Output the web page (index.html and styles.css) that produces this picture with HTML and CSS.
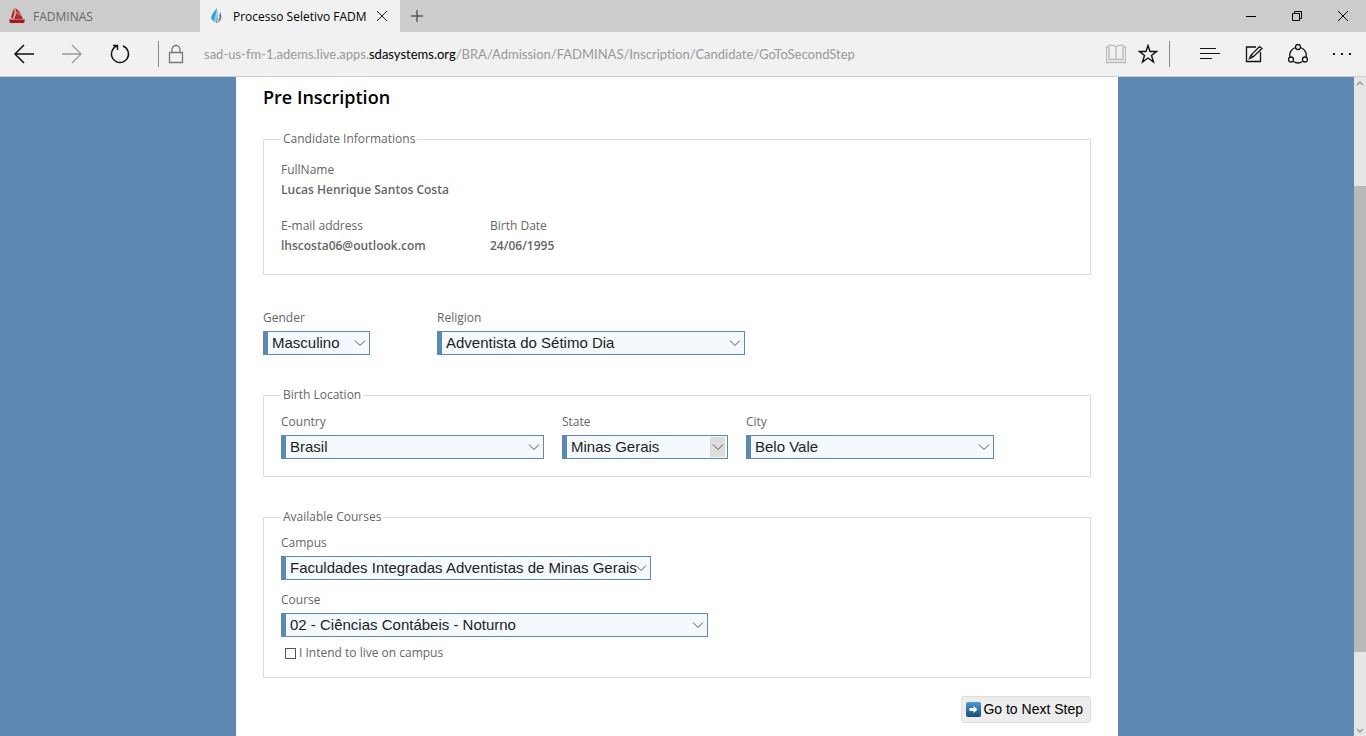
FILE: index.html
```html
<!DOCTYPE html>
<html lang="en">
<head>
<meta charset="utf-8">
<title>Processo Seletivo FADMINAS</title>
<link rel="stylesheet" href="styles.css">
</head>
<body>
<header class="browser">
  <div class="tabbar">
    <div class="tab">
      <svg class="favicon" width="16" height="16" viewBox="0 0 16 16"><path d="M5 0C6 2 6 8 3 11C1 10 3 6 5 0ZM6 0C10 2 12 6 14 11H5C7 7 7 3 6 0Z" fill="#b32a2c"/><path d="M6 1Q8 6 5 10M7 4L13 8" stroke="#d7a0a0" fill="none"/><path d="M0 11.5H16L15 15H1Z" fill="#a31b20"/></svg>
      <span class="tab-title">FADMINAS</span>
    </div>
    <div class="tab tab-active">
      <svg class="favicon" width="16" height="16" viewBox="0 0 16 16"><path d="M8 0C8 5 6 8 5 13C0 11 2 7 8 0Z" fill="#2aa5e6"/><path d="M8 2C10 7 9 11 5 15C4 11 9 7 8 2Z" fill="#74cdf5"/><path d="M11 4C14 9 12 14 7 15C6 12 11 9 11 4Z" fill="#707c87"/><path d="M10 8Q10 11 8 14" stroke="#fff" fill="none"/></svg>
      <span class="tab-title">Processo Seletivo FADM</span>
      <button class="tab-close" aria-label="Close tab"><svg width="12" height="12" viewBox="0 0 12 12"><path d="M1 1L11 11M11 1L1 11" stroke="#222" fill="none"/></svg></button>
    </div>
    <button class="new-tab" aria-label="New tab"><svg width="12" height="12" viewBox="0 0 12 12"><path d="M6 0V12M0 6H12" stroke="#555" fill="none" stroke-width="1.4"/></svg></button>
    <div class="window-buttons">
      <button aria-label="Minimize"><svg width="12" height="12" viewBox="0 0 12 12"><path d="M1 6.5H11" stroke="#000"/></svg></button>
      <button aria-label="Restore"><svg width="12" height="12" viewBox="0 0 12 12"><path d="M1.5 3.5H8.500V10.500H1.500ZM3.500 3.500V1.500H10.500V8.500H8.500" stroke="#000" fill="none"/></svg></button>
      <button aria-label="Close"><svg width="12" height="12" viewBox="0 0 12 12"><path d="M1 1L11 11M11 1L1 11" stroke="#000" fill="none"/></svg></button>
    </div>
  </div>
  <div class="toolbar">
    <nav class="nav-buttons">
      <button aria-label="Back"><svg width="22" height="20" viewBox="0 0 22 20"><path d="M21 10H2M11 1L2 10L11 19" stroke="#111" fill="none" stroke-width="1.5"/></svg></button>
      <button aria-label="Forward"><svg width="22" height="20" viewBox="0 0 22 20"><path d="M1 10H20M11 1L20 10L11 19" stroke="#999" fill="none" stroke-width="1.3"/></svg></button>
      <button aria-label="Refresh"><svg width="22" height="20" viewBox="0 0 22 20"><path d="M14 2A8.500 8.500 0 1 1 8 2M4 1.500H8.500V6" stroke="#111" fill="none" stroke-width="1.4"/></svg></button>
    </nav>
    <div class="address">
      <svg class="lock" width="16" height="20" viewBox="0 0 16 20"><path d="M1.500 8.500H14.500V18.500H1.500ZM4 8V5.500A4 4 0 0 1 12 5.500V8" stroke="#777" fill="none" stroke-width="1.3"/></svg>
      <div class="url">sad-us-fm-1.adems.live.apps.<span class="domain">sdasystems.org</span>/BRA/Admission/FADMINAS/Inscription/Candidate/GoToSecondStep</div>
      <button aria-label="Reading view"><svg width="20" height="20" viewBox="0 0 20 20"><path d="M3 3H.500V18.500H19.500V3H17M10 3V16M10 3Q7 .500 3 1.500V15.500H17V1.500Q13 .500 10 3" stroke="#bbb" fill="none" stroke-width="1.3"/></svg></button>
      <button aria-label="Favorites"><svg width="20" height="20" viewBox="0 0 20 20"><path d="M10 1.500L12 7.500H18.500L13.500 11.500L15.500 18L10 14L4.500 18L6.500 11.500L1.500 7.500H8Z" stroke="#111" fill="none" stroke-width="1.4"/></svg></button>
    </div>
    <div class="tools">
      <button aria-label="Hub"><svg width="20" height="20" viewBox="0 0 20 20"><path d="M0 4.500H16M0 9.500H20M0 14.500H12" stroke="#111" stroke-width="1"/></svg></button>
      <button aria-label="Web note"><svg width="20" height="20" viewBox="0 0 20 20"><path d="M12 3H2.500V17.500H16.500V8M5.500 14.500L7 11L15.500 2.500L18 4.500L9 13ZM7 11L9 13" stroke="#111" fill="none" stroke-width="1.3"/></svg></button>
      <button aria-label="Share"><svg width="20" height="20" viewBox="0 0 20 20"><g stroke="#111" fill="none" stroke-width="1.3"><circle cx="10" cy="3" r="2.500"/><circle cx="3" cy="15.500" r="2.500"/><circle cx="17" cy="15.500" r="2.500"/><path d="M7.500 3.500A8 8 0 0 0 2 13M12.500 3.500A8 8 0 0 1 18 13M5.500 17.500A8 8 0 0 0 14.500 17.500"/></g></svg></button>
      <button aria-label="More"><svg width="20" height="20" viewBox="0 0 20 20"><path d="M1 9H3V11H1ZM9 9H11V11H9ZM17 9H19V11H17Z" fill="#111"/></svg></button>
    </div>
  </div>
</header>
<div class="viewport">
  <main class="page">
    <form class="form">
      <h1 class="title">Pre Inscription</h1>
      <fieldset class="group info">
        <legend>Candidate Informations</legend>
        <dl class="fact"><dt>FullName</dt><dd>Lucas Henrique Santos Costa</dd></dl>
        <div class="facts">
          <dl class="fact"><dt>E-mail address</dt><dd>lhscosta06@outlook.com</dd></dl>
          <dl class="fact"><dt>Birth Date</dt><dd>24/06/1995</dd></dl>
        </div>
      </fieldset>
      <div class="row personal">
        <div class="field gender"><label for="gender">Gender</label><div class="picker"><select id="gender"><option>Masculino</option></select><svg class="chevron" viewBox="0 0 15 20"><path d="M3 7.500L8 12.500L13 7.500"/></svg></div></div>
        <div class="field religion"><label for="religion">Religion</label><div class="picker"><select id="religion"><option>Adventista do Sétimo Dia</option></select><svg class="chevron" viewBox="0 0 15 20"><path d="M3 7.500L8 12.500L13 7.500"/></svg></div></div>
      </div>
      <fieldset class="group location">
        <legend>Birth Location</legend>
        <div class="row">
          <div class="field country"><label for="country">Country</label><div class="picker"><select id="country"><option>Brasil</option></select><svg class="chevron" viewBox="0 0 15 20"><path d="M3 7.500L8 12.500L13 7.500"/></svg></div></div>
          <div class="field state"><label for="state">State</label><div class="picker"><select id="state"><option>Minas Gerais</option></select><svg class="chevron chevron-active" viewBox="0 0 15 20"><path d="M3 7.500L8 12.500L13 7.500"/></svg></div></div>
          <div class="field city"><label for="city">City</label><div class="picker"><select id="city"><option>Belo Vale</option></select><svg class="chevron" viewBox="0 0 15 20"><path d="M3 7.500L8 12.500L13 7.500"/></svg></div></div>
        </div>
      </fieldset>
      <fieldset class="group courses">
        <legend>Available Courses</legend>
        <div class="field campus"><label for="campus">Campus</label><div class="picker"><select id="campus"><option>Faculdades Integradas Adventistas de Minas Gerais</option></select><svg class="chevron" viewBox="0 0 15 20"><path d="M3 7.500L8 12.500L13 7.500"/></svg></div></div>
        <div class="field course"><label for="course">Course</label><div class="picker"><select id="course"><option>02 - Ciências Contábeis - Noturno</option></select><svg class="chevron" viewBox="0 0 15 20"><path d="M3 7.500L8 12.500L13 7.500"/></svg></div></div>
        <div class="check"><input type="checkbox" id="live"><label for="live">I Intend to live on campus</label></div>
      </fieldset>
      <button type="button" class="next"><svg width="15" height="15" viewBox="0 0 15 15"><defs><linearGradient id="blue" x2="0" y2="1"><stop stop-color="#4d9bd0"/><stop offset="1" stop-color="#174a7c"/></linearGradient></defs><rect width="15" height="15" rx="2" fill="url(#blue)"/><path d="M3.500 6H7.500V4L11.500 7.500L7.500 11V9H3.500Z" fill="#fff"/></svg>Go to Next Step</button>
    </form>
  </main>
  <div class="scrollbar">
    <svg width="8" height="6" viewBox="0 0 8 6"><path d="M1 5L4 2L7 5" stroke="#999" fill="none" stroke-width="1.5"/></svg>
    <div class="track"><div class="thumb"></div></div>
    <svg width="8" height="6" viewBox="0 0 8 6"><path d="M1 1L4 4L7 1" stroke="#999" fill="none" stroke-width="1.5"/></svg>
  </div>
</div>
</body>
</html>
```
FILE: styles.css
```css
* { box-sizing: border-box; }
body { margin: 0; height: 100vh; display: flex; flex-direction: column; overflow: hidden; font-family: "Open Sans", "Noto Sans", sans-serif; font-size: 12px; }
button { border: 0; padding: 0; background: none; display: flex; align-items: center; justify-content: center; }
svg { display: block; flex: none; }

.browser { flex: none; background: #f1f1f1; border-bottom: 1px solid #ccc; }
.tabbar { display: flex; height: 32px; background: #ccc; }
.tab { width: 200px; padding: 0 10px 0 9px; display: flex; align-items: center; gap: 8px; color: #666; white-space: nowrap; }
.tab-active { background: #f1f1f1; color: #000; }
.tab-title { flex: 1; overflow: hidden; line-height: 18px; padding-top: 2px; }
.tab-close { width: 16px; height: 16px; }
.new-tab { width: 34px; }
.window-buttons { margin-left: auto; display: flex; }
.window-buttons button { width: 46px; }
.toolbar { display: flex; align-items: center; height: 44px; }
.nav-buttons { display: flex; }
.nav-buttons button { width: 48px; }
.address { flex: 1; display: flex; align-items: center; gap: 12px; height: 26px; margin-left: 14px; padding: 0 11px 0 9px; border-left: 1px solid #888; border-right: 1px solid #888; }
.url { flex: 1; margin-left: 8px; color: #999; white-space: nowrap; overflow: hidden; font-family: Lato, "Open Sans", sans-serif; font-size: 13px; line-height: 20px; }
.domain { color: #000; }
.tools { display: flex; padding: 0 2px 0 18px; }
.tools button { width: 44px; }

.viewport { flex: 1; min-height: 0; display: flex; background: #5c88b3; }
.page { flex: 1; display: flex; justify-content: center; overflow: hidden; }
.form { width: 882px; padding: 8px 27px 0; background: #fff; color: #666; display: flex; flex-direction: column; }
.title { margin: 0; font-size: 18px; font-weight: 600; line-height: 24px; color: #000; }
.group { margin: 32px 0 0; border: 1px solid #ddd; padding: 9px 17px 17px; min-width: 0; }
.group legend { padding: 0 2px; line-height: 16px; }
.info { margin-top: 22px; padding: 13px 17px 18px; }
.fact { margin: 0; line-height: 20px; }
.fact dd { margin: 0; font-weight: 600; }
.facts { display: grid; grid-template-columns: 209px 1fr; margin-top: 16px; }
.row { display: flex; gap: 18px; }
.personal { margin-top: 33px; gap: 67px; }
.field { max-width: 100%; }
.field label { display: block; line-height: 20px; margin-bottom: 3px; }
.gender { width: 107px; }
.religion { width: 308px; }
.country { width: 263px; }
.state { width: 166px; }
.city { width: 248px; }
.campus { width: 370px; }
.course { width: 427px; margin-top: 10px; }
.picker { display: grid; align-items: center; }
.picker select { grid-area: 1 / 1; appearance: none; width: 100%; height: 24px; margin: 0; padding: 0 12px 2px 4px; border: 1px solid #5c88b3; border-left-width: 5px; border-radius: 0; background: #f4f9fe; color: #222; font: 15px "Liberation Sans", Arial, sans-serif; }
.chevron { grid-area: 1 / 1; justify-self: end; width: 15px; height: 20px; margin-right: 3px; fill: none; stroke: #555; stroke-width: 1; pointer-events: none; }
.chevron-active { background: #ddd; }
.courses { padding: 8px 17px 14px; }
.check { display: flex; align-items: center; gap: 3px; margin: 6px 0 0 4px; line-height: 20px; }
.check input { appearance: none; width: 11px; height: 11px; margin: 0; border: 1px solid #555; background: #fff; }
.next { align-self: flex-end; margin-top: 18px; height: 27px; padding: 0 7px 1px 4px; gap: 2px; border: 1px solid #ddd; border-radius: 3px; background: #ededed; color: #000; font: 14px "Liberation Sans", Arial, sans-serif; }

.scrollbar { width: 12px; padding: 3px 0 2px; background: #e6e6e6; display: flex; flex-direction: column; align-items: center; }
.track { flex: 1; width: 100%; padding: 100px 0 76px; }
.thumb { height: 100%; background: #b9b9b9; }
```
